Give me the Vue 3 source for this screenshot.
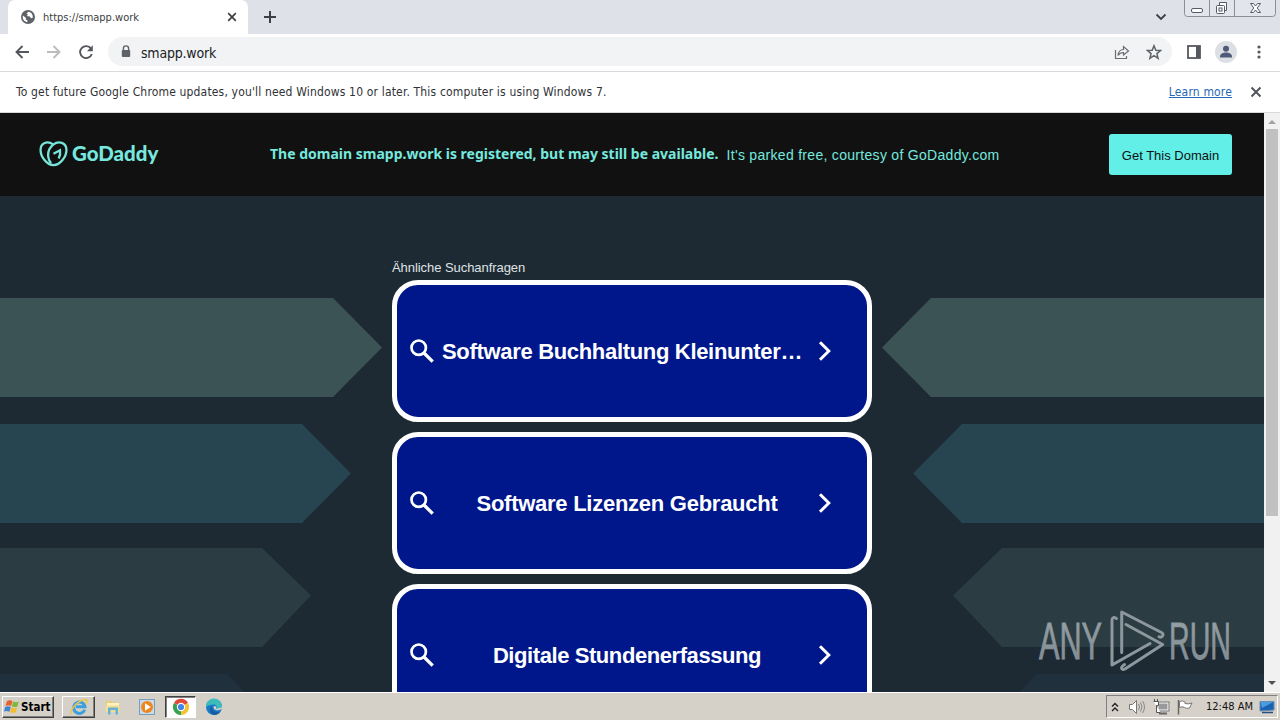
<template>
  <div class="screen">
    <div class="tabstrip">
      <div class="tab">
        <svg class="globe" viewBox="0 0 14 14">
          <circle cx="7" cy="7" r="7" fill="#5f6368" />
          <path d="M2 5.500 5 8l-.3 1.500 1.600.7.2 1.900C3.500 12 1.700 9.500 1.700 7zM7.500 1.700c-.4 1-1.700.9-2 1.800L7 4.600l-1.300 1.500 3.200.3L10 8.300l1.700-.6c.6-2.700-1.500-5.700-4.200-6z" fill="#fff" />
        </svg>
        <span class="tab-title">https://smapp.work</span>
        <svg class="tab-close" viewBox="0 0 10 10"><path d="M1.200 1.200 8.800 8.800M8.800 1.200 1.200 8.800" stroke="#3c4043" stroke-width="1.700" /></svg>
      </div>
      <svg class="new-tab" viewBox="0 0 12 12"><path d="M6 0v12M0 6h12" stroke="#3c4043" stroke-width="2" /></svg>
      <svg class="tab-search" viewBox="0 0 12 8"><path d="m1.500 1.500 4.500 4.500 4.500-4.500" fill="none" stroke="#3c4043" stroke-width="1.800" /></svg>
      <svg class="window-buttons" viewBox="0 0 94 18">
        <path d="M1.500 0v13.500q0 3 3 3h85q3 0 3-3V0M26.500 0v16M51.500 0v16" fill="#e2e5ea" stroke="#8b8e96" />
        <rect x="8.500" y="8.500" width="11" height="4" rx="1.500" fill="#fff" stroke="#555b66" />
        <path d="M36.500 2.500h7v8h-7z" fill="#fff" stroke="#555b66" />
        <rect x="33.500" y="5.500" width="8" height="8" rx="1" fill="#fff" stroke="#555b66" />
        <rect x="36" y="8" width="3" height="3" fill="none" stroke="#555b66" />
        <path d="M67.500 3.500h3l2 2.500 2-2.500h3l-3.300 4.500 3.300 4.500h-3l-2-2.500-2 2.500h-3l3.300-4.500z" fill="#fff" stroke="#555b66" />
      </svg>
    </div>

    <div class="toolbar">
      <svg class="nav-icon back" viewBox="0 0 14 14"><path d="M14 7H1.500M7.500 1 1.500 7l6 6" fill="none" stroke="#53575b" stroke-width="1.900" /></svg>
      <svg class="nav-icon forward" viewBox="0 0 14 14"><path d="M0 7h12.500M6.500 1l6 6-6 6" fill="none" stroke="#babcbe" stroke-width="1.900" /></svg>
      <svg class="nav-icon" viewBox="0 0 14 14"><path d="M12 3.600A6 6 0 1 0 12.800 9" fill="none" stroke="#53575b" stroke-width="1.900" /><path d="M13.800.3v5.900H8z" fill="#53575b" /></svg>
      <div class="omnibox">
        <svg class="lock" viewBox="0 0 10 13"><path d="M2.400 6V3.500a2.600 2.600 0 0 1 5.200 0V6" fill="none" stroke="#5f6368" stroke-width="1.400" /><rect x=".8" y="5" width="8.400" height="7" rx="1" fill="#5f6368" /></svg>
        <span class="url">smapp.work</span>
        <svg class="share" viewBox="0 0 16 16"><path d="M1.500 6v8.500h11V12M4 11.500c.5-4 2.500-6 5.500-6V2.500l5 4.500-5 4V8.500c-2.500 0-4 .8-5.500 3z" fill="none" stroke="#6a6d72" stroke-width="1.200" /></svg>
        <svg class="star" viewBox="0 0 16 16"><path d="m8 1.700 1.800 4.500 4.800.3-3.700 3.100 1.200 4.700L8 11.700l-4.100 2.600 1.200-4.700L1.400 6.500l4.800-.3z" fill="none" stroke="#5f6368" stroke-width="1.500" /></svg>
      </div>
      <svg class="panel" viewBox="0 0 14 14"><rect x="1" y="1" width="12" height="12" fill="none" stroke="#55585d" stroke-width="1.800" /><path d="M9 1h4v12H9z" fill="#55585d" /></svg>
      <svg class="profile" viewBox="0 0 22 22"><circle cx="11" cy="11" r="11" fill="#dcdfe3" /><circle cx="11" cy="7.700" r="3" fill="#4d5b78" /><path d="M5 16.500v-1.300c0-2.300 3.200-3.700 6-3.700s6 1.400 6 3.700v1.300z" fill="#4d5b78" /></svg>
      <svg class="menu" viewBox="0 0 4 14"><circle cx="2" cy="2" r="1.600" /><circle cx="2" cy="7" r="1.600" /><circle cx="2" cy="12" r="1.600" /></svg>
    </div>

    <div class="infobar">
      <span class="info-text">To get future Google Chrome updates, you'll need Windows 10 or later. This computer is using Windows 7.</span>
      <a class="learn">Learn more</a>
      <svg class="info-close" viewBox="0 0 12 12"><path d="m1.500 1.500 9 9M10.500 1.500l-9 9" stroke="#505357" stroke-width="1.900" /></svg>
    </div>

    <div class="viewport">
      <main class="page">
        <header class="banner">
          <div class="brand">
            <svg class="brand-mark" viewBox="0 0 28 26">
              <g fill="none" stroke="#76e6da" stroke-width="2.200">
                <path d="M14 24.200C7.500 24.200 1.500 16 1.500 9.500 1.500 3 8 .2 13.600 4.200M14 24.200c6.500 0 12.500-8.200 12.500-14.700C26.500 2.500 19 .2 14 4.200 10.500 7 8.300 12 9 16.500c.3 2.400 1.300 4.300 2.700 5.700" />
                <path d="M14 13.300 20.300 9.800c.5 3 0 5.500-1.300 8" />
              </g>
            </svg>
            <span class="brand-name">GoDaddy</span>
          </div>
          <div class="notice">
            <strong>The domain smapp.work is registered, but may still be available.</strong>
            <span>It's parked free, courtesy of GoDaddy.com</span>
          </div>
          <button class="get-domain">Get This Domain</button>
        </header>
        <section class="content">
          <svg class="arrows" viewBox="0 0 1264 496">
            <g v-for="a in arrows" :key="a.y" :fill="a.fill">
              <path :d="leftArrow(a)" />
              <path :d="leftArrow(a)" transform="translate(1264 0) scale(-1 1)" />
            </g>
          </svg>
          <div class="related">
            <p class="related-title">Ähnliche Suchanfragen</p>
            <div v-for="term in terms" :key="term.label" class="card">
              <svg class="search" viewBox="0 0 24 24"><circle cx="8.700" cy="8.700" r="7.200" fill="none" stroke="#fff" stroke-width="2.700" /><path d="m14 14 8.700 8.700" stroke="#fff" stroke-width="3.300" /></svg>
              <span class="term" :class="{ long: term.long }" :style="{ letterSpacing: term.spacing + 'px' }">{{ term.label }}</span>
              <svg class="chevron" viewBox="0 0 14 20"><path d="m2 1.200 8.800 8.800L2 18.800" fill="none" stroke="#fff" stroke-width="3" /></svg>
            </div>
          </div>
        </section>
      </main>
      <div class="scrollbar">
        <svg class="scroll-arrow" viewBox="0 0 16 16"><path d="m4 11 4-4 4 4z" fill="#a3a3a3" /></svg>
        <div class="thumb"></div>
        <svg class="scroll-arrow" viewBox="0 0 16 16"><path d="m4 5 4 4 4-4z" fill="#505050" /></svg>
      </div>
    </div>

    <div class="watermark">
      <svg viewBox="0 0 200 64">
        <defs>
          <linearGradient id="mark" x1="0" y1="0" x2="0" y2="1">
            <stop offset="0" stop-color="#9aa5aa" />
            <stop offset="1" stop-color="#7c868e" />
          </linearGradient>
        </defs>
        <g class="mark-text" fill="url(#mark)" stroke="#8d989e" stroke-width=".8">
          <text transform="translate(1 50) scale(.59 1)">ANY</text>
          <text transform="translate(131 50) scale(.55 1)">RUN</text>
        </g>
        <g fill="none" stroke="#8d989e" stroke-width="3" stroke-linejoin="round" stroke-linecap="round">
          <path d="M83.700 43.500V3L123.500 23.500q2.500 1.500 1 3.500-1.500 1.800-3.500.7" />
          <path d="M88 15.500 124.700 35.500 87 60q-3 1.500-3.500-1.300.5-1.700 3-3.200" />
          <path d="M78.500 9.500q-4-2.500-4.500 1.500V56L112 34.500" />
        </g>
      </svg>
    </div>

    <footer class="taskbar">
      <button class="start">
        <svg class="win-flag" viewBox="0 0 17 16">
          <path d="M3 2.500q3-2 6-.2L7.500 7.500q-3-1.700-6 0z" fill="#e7602f" />
          <path d="M9.800 2.700q2.700 1.500 6 0l-1.500 5.200q-3 1.500-6-.1z" fill="#7eb83c" />
          <path d="M1.200 8.500q3-1.700 6 0L5.700 13.600q-3-1.600-5.700-.2z" fill="#3d85cf" />
          <path d="M8 8.900q3 1.600 6 .2l-1.500 5q-3 1.500-5.900-.2z" fill="#f4bd2c" />
        </svg>
        <span>Start</span>
      </button>
      <div class="task raised">
        <svg viewBox="0 0 18 18">
          <path d="M14.700 11.700A5.700 5.700 0 1 1 15 8.800H6" fill="none" stroke="#3e9fdd" stroke-width="3" />
          <path d="M1.500 16C-1 12 8 2 16 1.500c2 .3.800 3-.5 4.500" fill="none" stroke="#edc645" stroke-width="1.500" />
        </svg>
      </div>
      <div class="task">
        <svg viewBox="0 0 18 18">
          <path d="M2 3h5l1 1.500h7V14H2z" fill="#e7ce77" />
          <path d="M3 5h12v3H3z" fill="#fff4bd" />
          <path d="M1.500 7.500h14V14h-14z" fill="#f1dd91" />
          <path d="M4 16.500V10.500q0-1 1-1h8q1 0 1 1v6h-2.500V12h-5v4.500z" fill="#65b1d8" />
        </svg>
      </div>
      <div class="task">
        <svg viewBox="0 0 18 18">
          <rect x="1.500" y="1.500" width="15" height="15" fill="#c5dced" stroke="#7a9db9" />
          <circle cx="9" cy="9" r="6" fill="#ef851d" /><path d="M7 5.200 12.800 9 7 12.800z" fill="#fff" />
        </svg>
      </div>
      <div class="task pressed">
        <svg viewBox="0 0 18 18">
          <path d="M9 9 2 5A8 8 0 0 1 16 5z" fill="#df4a3b" />
          <path d="m9 9 7-4a8 8 0 0 1-7 12z" fill="#f4c332" />
          <path d="M9 9v8A8 8 0 0 1 2 5z" fill="#37a352" />
          <circle cx="9" cy="9" r="4.200" fill="#fff" /><circle cx="9" cy="9" r="3.100" fill="#4384ed" />
        </svg>
      </div>
      <div class="task">
        <svg viewBox="0 0 18 18">
          <circle cx="9" cy="9" r="8" fill="#1b78c8" />
          <path d="M1 9A8 8 0 0 1 17 8c.2 3.500-3.500 4.500-6 3 2-2 .3-4.500-2.500-4.500C5.500 6.500 3 7.500 1 9z" fill="#3dbbbb" />
          <path d="M7 8c-1 4 2.500 7 8.500 5.500A8 8 0 0 1 9 17c-5-1-5-8-2-9z" fill="#155ca2" />
          <path d="M9 8c-1.500 2.500 1.500 5 5 4l2.500-.7L18 9l-6.500 2c-1-.5.500-1.500-.4-2.500z" fill="#d5d1c8" />
        </svg>
      </div>
      <div class="tray">
        <svg class="tray-up" viewBox="0 0 8 10"><path d="m1 4.500 3-3 3 3M1 9l3-3 3 3" fill="none" stroke="#222" stroke-width="1.400" /></svg>
        <svg class="tray-icon" viewBox="0 0 18 16"><path d="M1.500 5.500h3l4-4v13l-4-4h-3z" fill="#fff" stroke="#777" /><path d="M10.500 5q2 3 0 6M12.500 3.500q3 4.500 0 9M14.500 2q4 6 0 12" fill="none" stroke="#888" /></svg>
        <svg class="tray-icon" viewBox="0 0 18 16"><rect x="5.500" y="3.500" width="11" height="8" fill="#999" stroke="#fff" stroke-width="2" /><rect x="5" y="3" width="12" height="9" fill="none" stroke="#666" /><path d="M7 14.500h8" stroke="#666" stroke-width="2" /><path d="M1.500 2.500h5v4h-2v7h4" fill="#fff" stroke="#555" /><path d="M2.500 0v3M5.500 0v3" stroke="#555" /></svg>
        <svg class="tray-icon" viewBox="0 0 18 16"><path d="M2.500 1v14.500" stroke="#666" stroke-width="1.500" /><path d="M3.500 2.500q3-1.500 5.500.5v1.500q3 1 7-.5l-2.500 5q-3 1-5-.5-2.500-1.500-5 0z" fill="#fff" stroke="#777" /></svg>
        <span class="clock">12:48 AM</span>
        <svg class="desktop" viewBox="0 0 16 14"><path d="M1 1.500h14v8.500L1 11z" fill="#1762b5" stroke="#6b8caf" /><path d="M1.500 2h13L3 8z" fill="#4a9cde" /><path d="M3 12.500h11" stroke="#234f83" stroke-width="1.500" /></svg>
      </div>
    </footer>
  </div>
</template>

<script setup>
const terms = [
  { label: 'Software Buchhaltung Kleinunter…', spacing: -0.32, long: true },
  { label: 'Software Lizenzen Gebraucht', spacing: -0.26 },
  { label: 'Digitale Stundenerfassung', spacing: -0.42 }
]

// y is measured from the bottom edge of the banner
const arrows = [
  { y: 102, tip: 382, drop: 49.5, fill: '#3c5356' },
  { y: 228, tip: 351, drop: 49.5, fill: '#274451' },
  { y: 352, tip: 311, drop: 47.5, fill: '#2b3c42' },
  { y: 478, tip: 276, drop: 49.5, fill: '#20303d' }
]

const leftArrow = ({ y, tip, drop }) => `M0 ${y}H${tip - 49}L${tip} ${y + drop}L${tip - 49} ${y + 99}H0Z`
</script>

<style>
body {
  background: #1e2a33;
  overflow: hidden;
}
</style>

<style scoped>
.screen {
  width: 1280px;
  height: 720px;
  position: relative;
  display: flex;
  flex-direction: column;
  overflow: hidden;
  box-sizing: border-box;
  font-family: "DejaVu Sans Condensed", "DejaVu Sans", sans-serif;
  font-stretch: condensed;
  background: #fff;
}

.screen * {
  box-sizing: border-box;
}

svg {
  display: block;
  flex: none;
}

span,
strong {
  white-space: nowrap;
}

.tabstrip {
  height: 34px;
  flex: none;
  display: flex;
  align-items: flex-start;
  background: #dee1e8;
  padding-left: 8px;
}

.tab {
  width: 240px;
  height: 34px;
  display: flex;
  align-items: center;
  padding: 0 11px 0 13px;
  background: #fff;
  border-radius: 7px 7px 0 0;
}

.globe {
  width: 14px;
  height: 14px;
}

.tab-title {
  margin-left: 8px;
  font-size: 11px;
  color: #3c4043;
}

.tab-close {
  width: 10px;
  height: 10px;
  margin-left: auto;
}

.new-tab {
  width: 12px;
  height: 12px;
  margin: 11px 0 0 16px;
}

.tab-search {
  width: 12px;
  height: 8px;
  margin: 13px 16px 0 auto;
}

.window-buttons {
  width: 94px;
  height: 18px;
  margin-right: 3px;
}

.toolbar {
  height: 38px;
  flex: none;
  display: flex;
  align-items: center;
  padding: 0 19px 2px 15px;
  border-bottom: 1px solid #d8dade;
}

.nav-icon {
  width: 14px;
  height: 14px;
  margin-right: 18px;
}

.nav-icon:nth-child(3) {
  margin-right: 15px;
}

.omnibox {
  width: 1064px;
  height: 29px;
  display: flex;
  align-items: center;
  padding: 0 10px 0 13px;
  border-radius: 15px;
  background: #f1f3f4;
}

.lock {
  width: 10px;
  height: 13px;
}

.url {
  margin-left: 10px;
  padding-top: 2px;
  font-size: 14px;
  letter-spacing: -0.2px;
  color: #202124;
}

.share,
.star {
  width: 16px;
  height: 16px;
}

.share {
  margin-left: auto;
  margin-right: 16px;
}

.panel {
  width: 14px;
  height: 14px;
  margin-left: 15px;
}

.profile {
  width: 22px;
  height: 22px;
  margin-left: 14px;
}

.menu {
  width: 4px;
  height: 14px;
  margin-left: auto;
  fill: #55585d;
}

.infobar {
  height: 41px;
  flex: none;
  display: flex;
  align-items: center;
  padding: 0 18px 0 16px;
  border-bottom: 1px solid #d5d9dc;
  font-size: 12px;
  letter-spacing: 0.165px;
  color: #303236;
}

.learn {
  margin-left: auto;
  color: #2468b4;
  text-decoration: underline;
}

.info-close {
  width: 12px;
  height: 12px;
  margin-left: 18px;
}

.viewport {
  height: 579px;
  flex: none;
  display: flex;
}

.page {
  width: 1264px;
  height: 579px;
  overflow: hidden;
  background: #1e2a33;
}

.banner {
  height: 83px;
  display: flex;
  align-items: center;
  padding: 0 32px 0 39px;
  background: #111;
  color: #76e8df;
}

.brand {
  width: 231px;
  display: flex;
  align-items: center;
  padding-bottom: 3px;
}

.brand-mark {
  width: 29px;
  height: 27px;
}

.brand-name {
  margin-left: 4px;
  font-family: Lato, sans-serif;
  font-size: 20.5px;
  font-weight: 900;
  line-height: 20px;
}

.notice {
  display: flex;
  align-items: center;
  gap: 8px;
}

.notice strong {
  padding-bottom: 2px;
  font-family: "Noto Sans", sans-serif;
  font-size: 14px;
  font-weight: 700;
}

.notice span {
  font-family: "Liberation Sans", Arial, sans-serif;
  font-size: 14px;
  letter-spacing: 0.3px;
}

.get-domain {
  width: 123px;
  height: 41px;
  margin-left: auto;
  padding: 1px 0 0;
  border: 0;
  border-radius: 3px;
  background: #61efe8;
  color: #111;
  font-family: "Liberation Sans", Arial, sans-serif;
  font-size: 13px;
}

.content {
  height: 496px;
  position: relative;
  overflow: hidden;
}

.arrows {
  position: absolute;
  inset: 0;
  width: 1264px;
  height: 496px;
}

.related {
  position: relative;
  width: 480px;
  margin: 0 auto;
  padding-top: 63px;
}

.related-title {
  height: 21px;
  margin: 0;
  font-family: "Liberation Sans", Arial, sans-serif;
  font-size: 13px;
  letter-spacing: -0.06px;
  line-height: 17px;
  color: #dfe2e5;
}

.card {
  height: 142px;
  display: flex;
  align-items: center;
  margin-bottom: 10px;
  padding: 0 35px 0 13px;
  border: 5px solid #fff;
  border-radius: 26px;
  background: #00178b;
}

.search {
  width: 24px;
  height: 24px;
}

.term {
  width: 370px;
  margin-left: 8px;
  padding-top: 2px;
  text-align: center;
  font-family: "Liberation Sans", Arial, sans-serif;
  font-size: 22px;
  font-weight: 700;
  color: #fff;
}

.term.long {
  text-align: left;
}

.chevron {
  width: 14px;
  height: 20px;
  margin-left: auto;
}

.scrollbar {
  width: 16px;
  height: 579px;
  display: flex;
  flex-direction: column;
  align-items: center;
  background: #f1f1f1;
}

.scroll-arrow {
  width: 16px;
  height: 16px;
}

.thumb {
  width: 12px;
  height: 387px;
  margin-bottom: auto;
  background: #c1c1c1;
}

.watermark {
  position: absolute;
  left: 1038px;
  top: 609px;
  width: 200px;
  height: 64px;
}

.mark-text {
  font-family: "Liberation Sans", Arial, sans-serif;
  font-size: 52px;
}

.taskbar {
  height: 28px;
  flex: none;
  display: flex;
  align-items: center;
  padding: 0 2px;
  border-top: 1px solid #fff;
  background: #d5d0c8;
}

.start {
  width: 52px;
  height: 22px;
  display: flex;
  align-items: center;
  gap: 1px;
  padding: 0 1px;
  border: 1px solid;
  border-color: #fff #404040 #404040 #fff;
  box-shadow: inset -1px -1px #808080;
  background: #d5d0c8;
  color: #000;
  font-family: "DejaVu Sans Condensed", "DejaVu Sans", sans-serif;
  font-stretch: condensed;
  font-size: 11.5px;
  font-weight: 700;
}

.win-flag {
  width: 16px;
  height: 15px;
}

.task {
  width: 34px;
  height: 22px;
  display: grid;
  place-items: center;
}

.task svg {
  width: 18px;
  height: 18px;
}

.raised {
  width: 33px;
  margin-left: 8px;
  margin-right: 1px;
  border: 1px solid;
  border-color: #fff #404040 #404040 #fff;
  box-shadow: inset -1px -1px #808080;
}

.pressed {
  width: 31px;
  margin: 0 1px;
  border: 1px solid;
  border-color: #404040 #fff #fff #404040;
  box-shadow: inset 1px 1px #808080;
  background: #fff;
}

.tray {
  width: 172px;
  height: 23px;
  display: flex;
  align-items: center;
  margin-left: auto;
  padding: 0 2px 0 4px;
  border: 1px solid;
  border-color: #808080 #fff #fff #808080;
  color: #111;
}

.tray-up {
  width: 8px;
  height: 10px;
  margin-right: 9px;
}

.tray-icon {
  width: 18px;
  height: 16px;
  margin-right: 6px;
}

.clock {
  margin-left: 6px;
  font-size: 11px;
}

.desktop {
  width: 16px;
  height: 14px;
  margin-left: auto;
}
</style>
